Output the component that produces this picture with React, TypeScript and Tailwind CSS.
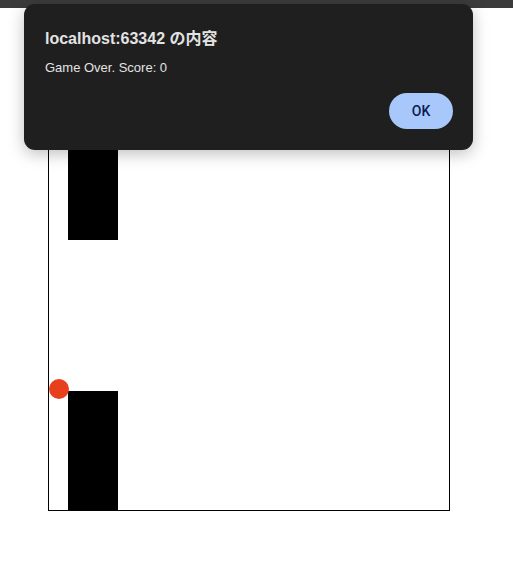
import React from 'react';

const font = { fontFamily: '"Liberation Sans", "Noto Sans CJK JP", sans-serif' };

const GameCanvas: React.FC = () => (
  <div className="relative w-[402px] h-[402px] border border-black bg-white">
    {/* top pipe */}
    <div className="absolute left-[19px] top-0 w-[50px] h-[130px] bg-black" />
    {/* bottom pipe */}
    <div className="absolute left-[19px] bottom-0 w-[50px] h-[119px] bg-black" />
    {/* bird */}
    <div className="absolute left-0 top-[269px] w-[20px] h-[20px] rounded-full bg-[#e8401c]" />
  </div>
);

const AlertDialog: React.FC = () => (
  <div
    className="absolute left-[24px] top-[4px] w-[449px] h-[146px] rounded-[11px] bg-[#1f1f1f] flex flex-col pl-[21px] pr-[20px] pt-[25px] pb-[21px] shadow-[0_4px_16px_rgba(0,0,0,0.25)]"
    style={font}
  >
    <div className="text-[16px] leading-[20px] font-bold text-[#e3e3e3]">localhost:63342 の内容</div>
    <div className="mt-[11px] text-[13px] leading-[16px] text-[#e3e3e3]">Game Over. Score: 0</div>
    <div className="mt-auto flex justify-end">
      <button className="w-[64px] h-[36px] rounded-full bg-[#a8c7fa] text-[14px] font-medium text-[#0b1d4f] font-['Roboto',sans-serif]">
        OK
      </button>
    </div>
  </div>
);

export default function App() {
  return (
    <div className="relative w-[513px] h-[571px] bg-white overflow-hidden">
      <div className="h-2 bg-[#3b3b3b]" />
      <div className="pl-[48px] pt-[101px]">
        <GameCanvas />
      </div>
      <AlertDialog />
    </div>
  );
}
